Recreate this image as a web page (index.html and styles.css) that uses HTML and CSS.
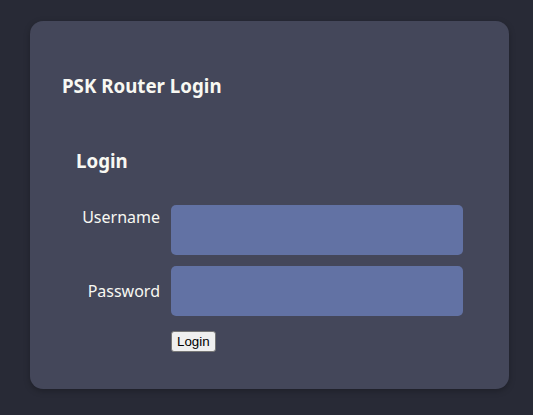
FILE: index.html
```html
<!DOCTYPE html>
<html lang="en">
<head>
<meta charset="utf-8">
<title>PSK Router Login</title>
<link rel="stylesheet" href="styles.css">
</head>
<body>
<main class="card">
  <h1 class="title">PSK Router Login</h1>
  <section class="login">
    <h2 class="login-heading">Login</h2>
    <form class="login-form">
      <label class="field-label field-label--top" for="username">Username</label>
      <input class="field-input" id="username" type="text">
      <label class="field-label field-label--center" for="password">Password</label>
      <input class="field-input" id="password" type="password">
      <div class="actions">
        <button type="submit" class="submit">Login</button>
      </div>
    </form>
  </section>
</main>
</body>
</html>
```
FILE: styles.css
```css
html, body {
  margin: 0;
  padding: 0;
}
body {
  background: #282a36;
  color: #f8f8f2;
  font-family: "Noto Sans", "DejaVu Sans", sans-serif;
  padding: 21px 24px 26px 30px;
  min-height: 415px;
  box-sizing: border-box;
}
.card {
  background: #44475a;
  border-radius: 13px;
  padding: 52px 32px 37px 32px;
  box-shadow: 0 2px 6px rgba(0, 0, 0, 0.25);
}
.title {
  margin: 0;
  font-size: 18.72px;
  font-weight: 700;
  line-height: 25px;
}
.login {
  padding: 0 14px;
  margin-top: 50px;
}
.login-heading {
  margin: 0 0 32px;
  font-size: 18.72px;
  font-weight: 700;
  line-height: 25px;
}
.login-form {
  display: grid;
  grid-template-columns: 84px 1fr;
  column-gap: 11px;
  row-gap: 11px;
}
.field-label {
  text-align: right;
  font-size: 16px;
  line-height: 22px;
}
.field-label--top {
  align-self: start;
  padding-top: 1px;
}
.field-label--center {
  align-self: center;
}
.field-input {
  height: 50px;
  box-sizing: border-box;
  border: none;
  border-radius: 5px;
  background: #6272a4;
  color: #f8f8f2;
  padding: 0 10px;
  font: inherit;
  outline: none;
}
.actions {
  grid-column: 2;
  margin-top: 4px;
  display: flex;
}
.submit {
  margin: 0;
  font-family: "Liberation Sans", Arial, sans-serif;
  font-size: 13.33px;
  line-height: 15px;
  color: #000;
  background: #efefef;
  border: 1px solid #767676;
  border-radius: 3px;
  padding: 2px 5px;
}
```
